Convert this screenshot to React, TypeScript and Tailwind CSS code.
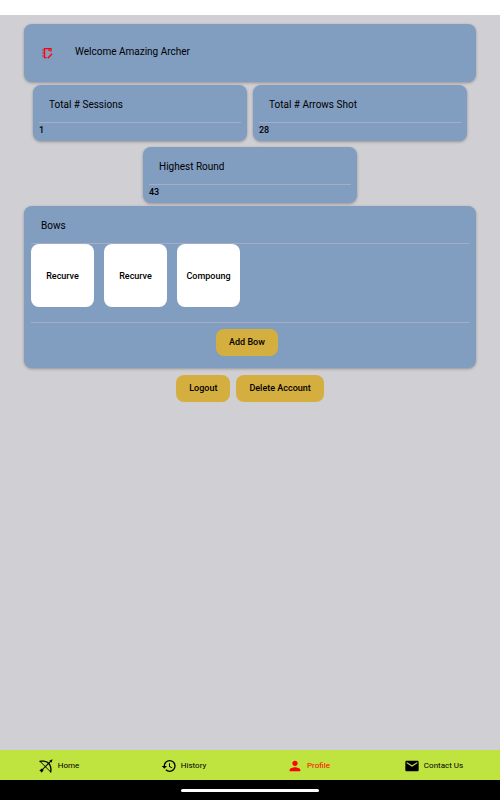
import type { ReactNode } from 'react';
import clsx from 'clsx';
import { MdEmail, MdHistory, MdPerson } from 'react-icons/md';

const stats = [
  { title: 'Total # Sessions', value: 1 },
  { title: 'Total # Arrows Shot', value: 28 },
  { title: 'Highest Round', value: 43 },
];

const bows = [
  { id: 1, name: 'Recurve' },
  { id: 2, name: 'Recurve' },
  { id: 3, name: 'Compoung' },
];

function BowArrowIcon() {
  return (
    <svg viewBox="0 0 24 24" className="size-4" fill="currentColor" aria-hidden="true">
      <path d="M19.03 6.03L20 7L22 2L17 4L17.97 4.97L16.15 6.79C10.87 2.16 3.3 3.94 2.97 4L2 4.26L2.5 6.2L3.29 6L10.12 12.82L6.94 16H5L2 19L4 20L5 22L8 19V17.06L11.18 13.88L18 20.71L17.81 21.5L19.74 22L20 21.03C20.06 20.7 21.84 13.13 17.21 7.85L19.03 6.03M4.5 5.78C6.55 5.5 11.28 5.28 14.73 8.21L10.82 12.12L4.5 5.78M18.22 19.5L11.88 13.18L15.79 9.27C18.72 12.72 18.5 17.45 18.22 19.5Z" />
    </svg>
  );
}

function NotebookEditIcon() {
  return (
    <svg viewBox="0 0 24 24" className="size-3" fill="none" stroke="currentColor" aria-hidden="true">
      <path d="M20 9V3H7v18h4" strokeWidth="2.5" />
      <path d="M2 6h4M2 12h4M2 18h4" strokeWidth="2" strokeOpacity="0.8" />
      <path d="M16 4v4l2-1.500" strokeWidth="2" />
      <path d="M13.500 22.500l8.500-9" strokeWidth="2.500" />
    </svg>
  );
}

function Card({ className, children }: { className?: string; children: ReactNode }) {
  return (
    <section
      className={clsx('rounded-lg bg-[#819dc0] shadow-[0_1px_3px_rgba(0,0,0,0.3)]', className)}
    >
      {children}
    </section>
  );
}

function CardTitle({ children }: { children: ReactNode }) {
  return (
    <h2 className="flex h-[38px] items-center border-b border-[#a5aec6] px-2.5 pt-0.5 text-[10px]">
      {children}
    </h2>
  );
}

function GoldButton({ children }: { children: ReactNode }) {
  return (
    <button
      type="button"
      className="h-[27px] rounded-lg bg-[#d4af3f] px-[13px] text-[9px] font-medium"
    >
      {children}
    </button>
  );
}

interface NavItemProps {
  label: string;
  icon: ReactNode;
  active?: boolean;
}

function NavItem({ label, icon, active }: NavItemProps) {
  return (
    <a
      href="#"
      aria-current={active ? 'page' : undefined}
      className={clsx(
        'flex flex-1 items-center justify-center gap-1 pt-0.5 pr-2 text-[8px]',
        active ? 'text-[#ff0000]' : 'text-black',
      )}
    >
      {icon}
      <span>{label}</span>
    </a>
  );
}

export default function App() {
  return (
    <div className="flex min-h-screen flex-col bg-[#d0cfd4] font-[Roboto,sans-serif] text-black">
      {/* Status bar */}
      <div className="h-[15px] bg-white" />

      <main className="flex flex-1 flex-col gap-[3px] px-6 pt-[9px]">
        <Card className="flex h-[58px] items-center pb-1">
          <button
            type="button"
            aria-label="Edit profile"
            className="mt-1 ml-[17px] text-[#ff0000]"
          >
            <NotebookEditIcon />
          </button>
          <h1 className="ml-[22px] text-[10px]">Welcome Amazing Archer</h1>
        </Card>

        {/* Stats */}
        <div className="flex flex-wrap justify-center gap-1.5">
          {stats.map((stat) => (
            <Card key={stat.title} className="h-14 w-[214px] px-1.5">
              <CardTitle>{stat.title}</CardTitle>
              <p className="text-[9px] leading-[14px] font-medium">{stat.value}</p>
            </Card>
          ))}
        </div>

        {/* Bows */}
        <Card className="px-[7px] pb-3">
          <CardTitle>Bows</CardTitle>
          <div className="flex gap-2.5 border-b border-[#a5aec6] pb-[15px]">
            {bows.map((bow) => (
              <button
                key={bow.id}
                type="button"
                className="size-[63px] rounded-lg bg-white pt-0.5 text-[9px] font-medium"
              >
                {bow.name}
              </button>
            ))}
          </div>
          <div className="flex justify-center pt-1.5 pr-1.5">
            <GoldButton>Add Bow</GoldButton>
          </div>
        </Card>

        {/* Account actions */}
        <div className="flex justify-center gap-1.5 pt-1">
          <GoldButton>Logout</GoldButton>
          <GoldButton>Delete Account</GoldButton>
        </div>
      </main>

      <nav className="flex h-[30px] bg-[#bfe33f]">
        <NavItem label="Home" icon={<BowArrowIcon />} />
        <NavItem label="History" icon={<MdHistory className="size-4" />} />
        <NavItem label="Profile" icon={<MdPerson className="size-4" />} active />
        <NavItem label="Contact Us" icon={<MdEmail className="size-4" />} />
      </nav>

      {/* Gesture bar */}
      <div className="flex h-5 items-center justify-center bg-black">
        <div className="h-[3px] w-[138px] rounded-full bg-white" />
      </div>
    </div>
  );
}
